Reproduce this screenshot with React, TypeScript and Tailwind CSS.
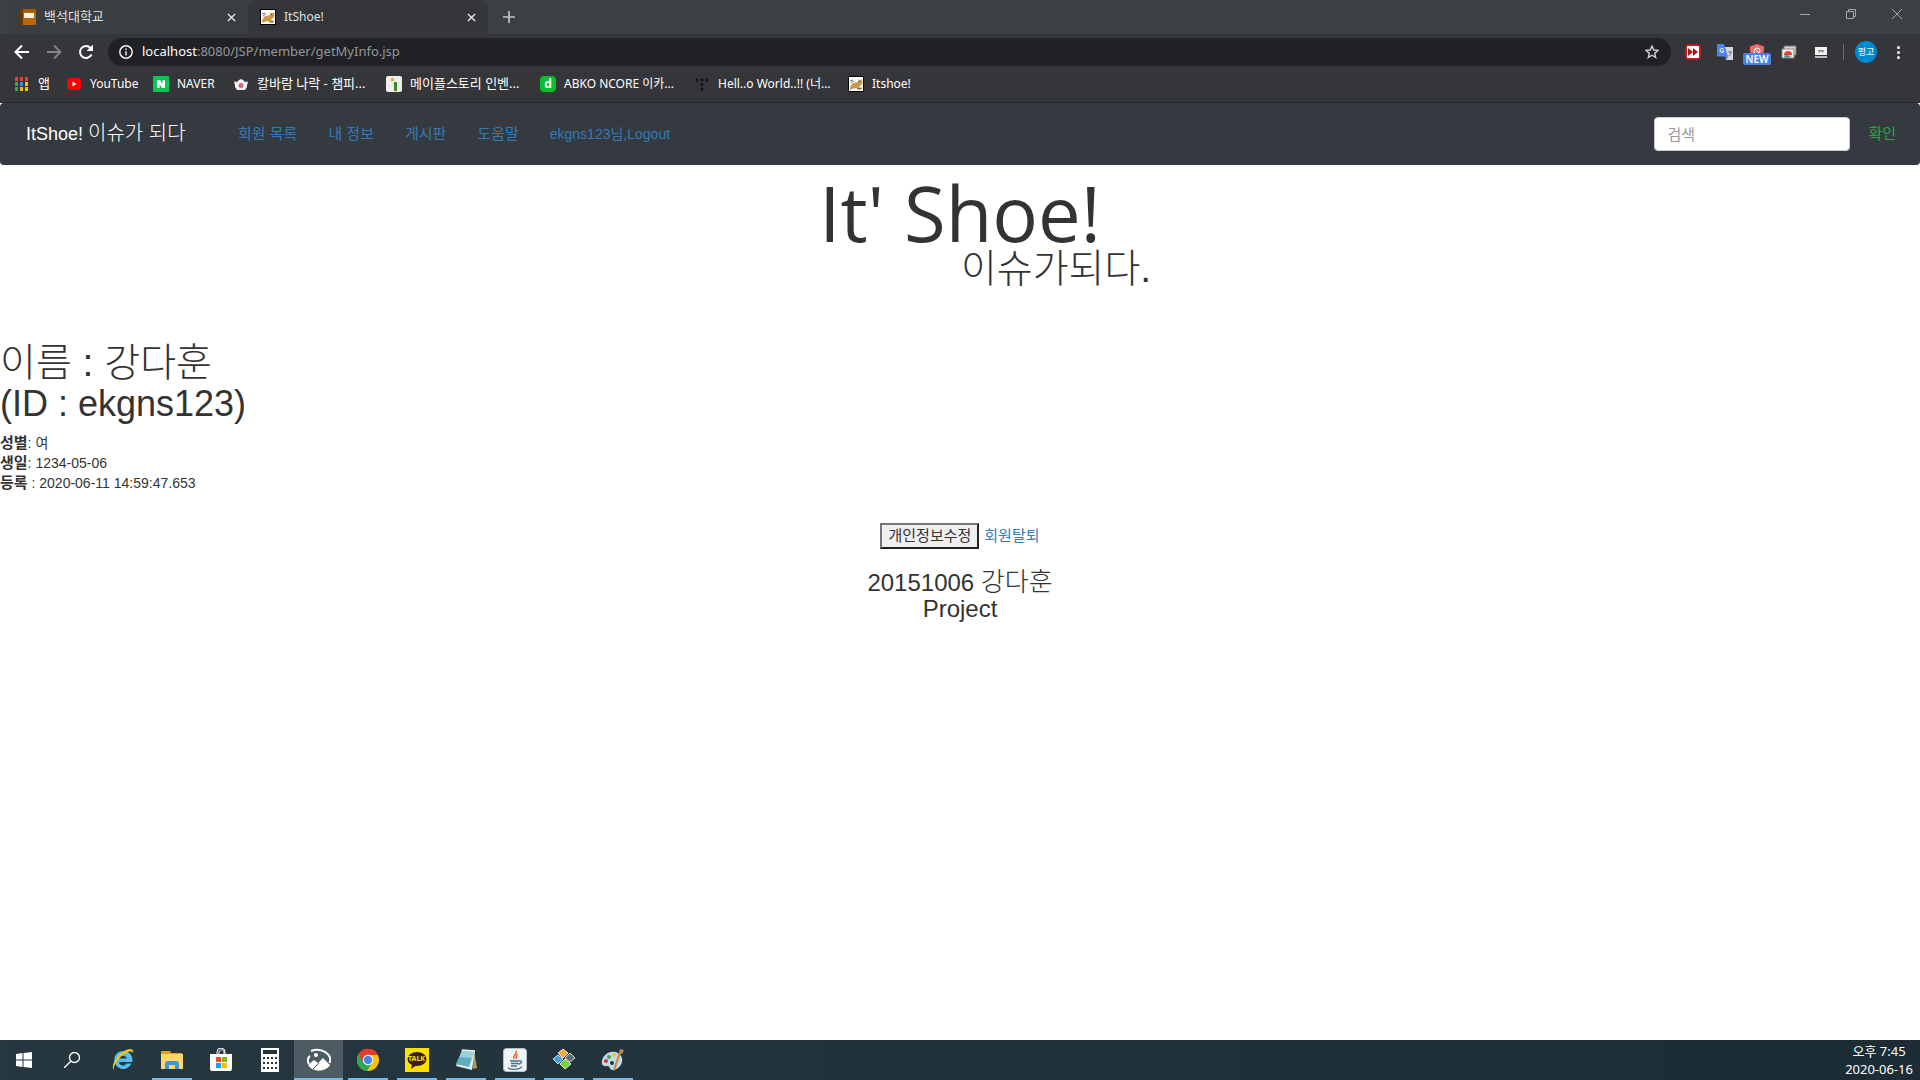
import React from "react";

const ui = "font-['Noto_Sans','Noto_Sans_CJK_KR',sans-serif]";
const body = "font-['Liberation_Sans','Noto_Sans_CJK_KR',sans-serif]";

function Cat() {
  return (
    <svg viewBox="0 0 16 16" className="size-4 shrink-0">
      <rect x=".5" y=".5" width="15" height="15" fill="#fff" stroke="#000" />
      <path d="M2 12c1-3 2-5 4-5l4-1 .5-3 1 1h1.500l1-1 .5 4-1.500 2-2 2 3 2-2 1-4-2-4 1-2 1z" fill="#c89a45" />
      <path d="M2 5l3-1M3 7l3-2M9 13l5-1" stroke="#5b5142" strokeWidth=".8" />
      <circle cx="11.5" cy="5.5" r=".6" fill="#333" />
    </svg>
  );
}

function Book() {
  return (
    <svg viewBox="0 0 16 16" className="size-4 shrink-0">
      <rect width="16" height="16" rx="1" fill="#b86808" />
      <rect width="3" height="16" fill="#6b3805" />
      <rect x="3" width="13" height="3" fill="#a05a08" />
      <rect x="4" y="4" width="10" height="5" fill="#f6f1e6" />
    </svg>
  );
}

function Close({ className }: { className: string }) {
  return (
    <svg viewBox="0 0 10 10" className={className} fill="none" stroke="currentColor" strokeWidth="1.6">
      <path d="M1 1l8 8M9 1L1 9" />
    </svg>
  );
}

function Tab({ icon, title, active }: { icon: React.ReactNode; title: string; active?: boolean }) {
  return (
    <div
      role="tab"
      aria-selected={!!active}
      className={`flex h-[34px] w-60 items-center rounded-t-lg px-3 text-[#dee1e6] ${active ? "bg-[#35363a] text-xs" : "bg-[#3a3e40] text-[13px]"}`}
    >
      {icon}
      <span className="ml-2 flex-1">{title}</span>
      <button aria-label="탭 닫기">
        <Close className="size-[9px]" />
      </button>
    </div>
  );
}

const bookmarks: { label: string; size: string; icon: React.ReactNode }[] = [
  {
    label: "앱",
    size: "w-[52px] text-[13px]",
    icon: (
      <svg viewBox="0 0 16 16" className="size-4 shrink-0">
        {["#ea4335", "#ea4335", "#ea4335", "#34a853", "#4285f4", "#fbbc04", "#34a853", "#fbbc04", "#fbbc04"].map((c, i) => (
          <rect key={i} x={1 + (i % 3) * 5} y={1 + Math.floor(i / 3) * 5} width="3" height="4" fill={c} />
        ))}
      </svg>
    ),
  },
  {
    label: "YouTube",
    size: "w-[87px] text-xs",
    icon: (
      <svg viewBox="0 0 16 16" className="size-4 shrink-0">
        <rect x="1" y="2" width="14" height="12" rx="3" fill="#f00" />
        <path d="M6.500 5.500v5L10.500 8z" fill="#fff" />
      </svg>
    ),
  },
  {
    label: "NAVER",
    size: "w-20 text-xs",
    icon: (
      <svg viewBox="0 0 16 16" className="size-4 shrink-0">
        <rect width="16" height="16" fill="#06c656" />
        <path d="M4 4h3l2.500 4V4H12v8H9L6.500 8v4H4z" fill="#fff" />
      </svg>
    ),
  },
  {
    label: "칼바람 나락 - 챔피...",
    size: "w-[153px] text-[13px]",
    icon: (
      <svg viewBox="0 0 16 16" className="size-4 shrink-0">
        <path d="M1 6l3 0 2-2 2-1 2 1 2 2 3 0-1 3v2l-2 3H4l-2-3V9z" fill="#f5f5f5" />
        <circle cx="8" cy="9.500" r="2.500" fill="#d86870" />
        <path d="M1 5l3 1M15 5l-3 1" stroke="#777" />
      </svg>
    ),
  },
  {
    label: "메이플스토리 인벤...",
    size: "w-[154px] text-[13px]",
    icon: (
      <svg viewBox="0 0 16 16" className="size-4 shrink-0">
        <rect width="16" height="16" rx="2" fill="#eee" />
        <rect x="5" y="2" width="3" height="3" fill="#f9ac0c" />
        <rect x="8" y="6" width="3" height="9" fill="#3d8b1e" />
      </svg>
    ),
  },
  {
    label: "ABKO NCORE 이카...",
    size: "w-[154px] text-xs",
    icon: (
      <span className="grid size-4 shrink-0 place-items-center rounded-sm bg-[#0abf2c] text-xs leading-4 font-bold text-white">d</span>
    ),
  },
  {
    label: "Hell..o World..!! (너...",
    size: "w-[154px] text-xs",
    icon: (
      <svg viewBox="0 0 16 16" className="size-4 shrink-0" fill="#111">
        <circle cx="3" cy="4" r="1.500" />
        <circle cx="8" cy="4" r="1.500" />
        <circle cx="13" cy="4" r="1.500" />
        <circle cx="8" cy="8.500" r="1.500" />
        <circle cx="8" cy="13" r="1.500" />
      </svg>
    ),
  },
  { label: "Itshoe!", size: "w-20 text-xs", icon: <Cat /> },
];

function Browser() {
  return (
    <header className={`${ui} border-b border-[#28292c] bg-[#35363a] text-xs text-white`}>
      <div className="flex h-[34px] items-start bg-[#3c4043]">
        <div role="tablist" className="flex pl-2">
          <Tab icon={<Book />} title="백석대학교" />
          <Tab icon={<Cat />} title="ItShoe!" active />
        </div>
        <button aria-label="새 탭" className="ml-[15px] self-center">
          <svg viewBox="0 0 12 12" className="size-3" stroke="#c0c2c4" strokeWidth="1.700">
            <path d="M6 0v12M0 6h12" />
          </svg>
        </button>
        <div className="ml-auto flex h-7 items-center gap-9 pr-[18px] text-[#a3a5a7]">
          <button aria-label="최소화">
            <svg viewBox="0 0 10 10" className="size-[10px]" stroke="currentColor">
              <path d="M0 5.500h10" />
            </svg>
          </button>
          <button aria-label="이전 크기로">
            <svg viewBox="0 0 10 10" className="size-[10px]" stroke="currentColor" fill="none">
              <path d="M.5 2.500h7v7h-7zM2.500 2.500v-2h7v7h-2" />
            </svg>
          </button>
          <button aria-label="닫기">
            <svg viewBox="0 0 10 10" className="size-[10px]" stroke="currentColor">
              <path d="M0 0l10 10M10 0L0 10" />
            </svg>
          </button>
        </div>
      </div>
      <div className="flex h-9 items-center pr-5 pl-[14px]">
        <button aria-label="뒤로">
          <svg viewBox="0 0 16 16" className="size-4" fill="none" stroke="#fff" strokeWidth="2">
            <path d="M15 8H2M8 1.500L1.500 8 8 14.500" />
          </svg>
        </button>
        <button aria-label="앞으로" className="ml-4">
          <svg viewBox="0 0 16 16" className="size-4" fill="none" stroke="#85868a" strokeWidth="1.800">
            <path d="M1 8h13M8 1.500L14.500 8 8 14.500" />
          </svg>
        </button>
        <button aria-label="새로고침" className="ml-4">
          <svg viewBox="0 0 16 16" className="size-4">
            <path d="M13.500 10.500A6 6 0 1 1 12.500 4" fill="none" stroke="#fff" strokeWidth="2" />
            <path d="M15 .5v6.500H8.500z" fill="#fff" />
          </svg>
        </button>
        <div className="ml-[14px] flex h-7 flex-1 items-center rounded-full bg-[#202124] pr-3 pl-[11px]">
          <svg viewBox="0 0 14 14" className="size-[14px]" fill="none" stroke="#f1f1f1" strokeWidth="1.500">
            <circle cx="7" cy="7" r="6.200" />
            <path d="M7 6.200v4.300M7 3.500v1.500" />
          </svg>
          <a href="#url" className="ml-[9px] flex-1 text-[13px] text-[#95979a]">
            <span className="text-white">localhost</span>:8080/JSP/member/getMyInfo.jsp
          </a>
          <button aria-label="북마크">
            <svg viewBox="0 0 14 14" className="size-[14px]" fill="none" stroke="#d0d1d3" strokeWidth="1.400">
              <path d="M7 1l1.700 4 4.300.4-3.300 2.800 1 4.300L7 10.200l-3.700 2.300 1-4.300L1 5.400 5.300 5z" />
            </svg>
          </button>
        </div>
        <div className="ml-[14px] flex items-center gap-4">
          <svg viewBox="0 0 16 16" className="size-4">
            <rect width="16" height="16" rx="4" fill="#c4191c" />
            <rect x="2" y="2" width="12" height="12" rx="1" fill="#fff" />
            <path d="M3 4l5 4-5 4zM8 4l5 4-5 4z" fill="#b5151a" />
          </svg>
          <svg viewBox="0 0 16 16" className="size-4">
            <path d="M6 3h10v13H9z" fill="#d5d6d8" />
            <path d="M0 0h7l4 12.500H0z" fill="#4b84ee" />
            <path d="M8 13l3-.5-2 3.500z" fill="#2b57b5" />
            <path d="M6.500 5A2 2 0 1 0 7 7H5" fill="none" stroke="#fff" />
            <path d="M11 8h4M13 7v1M11.500 12c2-1 2.500-2 2.500-4" fill="none" stroke="#667788" />
          </svg>
          <div className="relative size-4">
            <svg viewBox="0 0 16 16" className="size-4">
              <path d="M8 0l7 2.500c.5 5-1 10-7 13.500C2 12.500.5 7.500 1 2.500z" fill="#ee6a69" />
              <circle cx="8" cy="7" r="3" fill="none" stroke="#fff" />
              <path d="M6 5l4 4" stroke="#fff" />
            </svg>
            <span className="absolute top-[9px] -left-[6px] h-3 w-7 rounded-xs bg-[#4d80e4] text-center text-[10px] leading-3 font-semibold text-white">NEW</span>
          </div>
          <svg viewBox="0 0 16 16" className="size-4">
            <path d="M3 2h12v9H3z" fill="#d5d6d2" stroke="#777" />
            <path d="M1 5h12v9H1z" fill="#f1f1ee" stroke="#888" />
            <path d="M3 13.500a4 4 0 0 1 2-3.500l2 3.500z" fill="#36a352" />
            <path d="M3 11a4 4 0 0 1 8 0z" fill="#dd4436" />
            <path d="M11 11l.5 2.500H8z" fill="#f9c51a" />
            <circle cx="7.200" cy="12.500" r="1.600" fill="#4683ea" />
          </svg>
          <svg viewBox="0 0 16 16" className="size-4">
            <rect x="2" y="3" width="12" height="8" fill="#f2f2f2" />
            <rect x="2" y="12" width="12" height="2" fill="#bbb" />
            <path d="M6 8.500V6l1 1.500L8 6l1 1.500L10 6v2.500" fill="none" stroke="#555" strokeWidth=".8" />
          </svg>
        </div>
        <div className="ml-[14px] h-4 w-px bg-[#696a6e]" />
        <span className="ml-[11px] grid size-[22px] place-items-center rounded-full bg-[#0288d1] text-[9px] text-white">펑고</span>
        <button aria-label="메뉴" className="ml-5 flex flex-col gap-0.5">
          <span className="size-[3px] rounded-full bg-white" />
          <span className="size-[3px] rounded-full bg-white" />
          <span className="size-[3px] rounded-full bg-white" />
        </button>
      </div>
      <nav aria-label="북마크" className="flex h-8 items-center pb-1 pl-[14px]">
        {bookmarks.map((b) => (
          <a key={b.label} href="#bookmark" className={`flex shrink-0 items-center gap-2 whitespace-nowrap ${b.size}`}>
            {b.icon}
            <span>{b.label}</span>
          </a>
        ))}
      </nav>
    </header>
  );
}

function Page() {
  return (
    <main className={`${body} flex-1 bg-white text-sm leading-5 text-[#333]`}>
      <nav className="flex h-[62px] items-center rounded-sm bg-[#343a40] pr-6 pl-[26px] text-[#337ab7]">
        <a href="#home" className="w-[212px] text-lg text-white">
          ItShoe! <span className="text-[20px] font-light">이슈가 되다</span>
        </a>
        <div className="flex gap-[31px] text-[15px]">
          <a href="#members">회원 목록</a>
          <a href="#me">내 정보</a>
          <a href="#board">게시판</a>
          <a href="#help">도움말</a>
          <a href="#logout" className="text-sm">
            ekgns123님,Logout
          </a>
        </div>
        <form className="ml-auto flex items-center" onSubmit={(e) => e.preventDefault()}>
          <input
            aria-label="검색"
            placeholder="검색"
            className="h-[34px] w-[196px] rounded-sm border border-[#ccc] bg-white px-3 text-[15px] text-[#555] placeholder:text-[#999]"
          />
          <button className="ml-[18px] text-[15px] text-[#28a745]">확인</button>
        </form>
      </nav>
      <div className="flex flex-col items-center pt-3">
        <h1 className="font-['Open_Sans',sans-serif] text-[76px] leading-[72px]">It' Shoe!</h1>
        <p className="ml-48 text-[39px] leading-10 font-light">이슈가되다.</p>
      </div>
      <section className="pt-[54px]">
        <h1 className="text-4xl leading-10">
          <span className="text-[39px] font-light">이름 : 강다훈</span>
          <br />
          (ID : ekgns123)
        </h1>
        <p className="pt-[9px]">
          <b className="text-[15px]">성별</b>: 여
          <br />
          <b className="text-[15px]">생일</b>: 1234-05-06
          <br />
          <b className="text-[15px]">등록</b> : 2020-06-11 14:59:47.653
        </p>
      </section>
      <div className="flex items-center justify-center gap-[5px] pt-[30px] text-[15px]">
        <button className="h-[26px] border-2 border-t-[#767676] border-r-[#222] border-b-[#222] border-l-[#767676] bg-[#efefef] px-1.5 leading-5">
          개인정보수정
        </button>
        <a href="#leave" className="text-[#337ab7]">
          회원탈퇴
        </a>
      </div>
      <footer className="pt-5 text-center text-2xl leading-[26px]">
        20151006 <span className="text-[26px] font-light">강다훈</span>
        <br />
        Project
      </footer>
    </main>
  );
}

const tasks: { name: string; state?: string; icon: React.ReactNode }[] = [
  {
    name: "Internet Explorer",
    icon: (
      <svg viewBox="0 0 24 24" className="size-6">
        <path d="M12 3a9 9 0 1 0 8.500 12.500h-5A4 4 0 0 1 8 14h13.500C22 7 18 3 12 3zM8.200 10.500a4 4 0 0 1 7.600 0z" fill="#53c0f0" />
        <path d="M3 22C-1 18 6 6 15 2c5-2 8-1 7 3-1-2-3-2-7 0C8 9 2 17 3 22z" fill="#f5c518" />
      </svg>
    ),
  },
  {
    name: "파일 탐색기",
    state: "open",
    icon: (
      <svg viewBox="0 0 24 24" className="size-6">
        <path d="M1 3h9l1 2h11v15H1z" fill="#e5a11c" />
        <path d="M1 6h22v15H1z" fill="#ffd768" />
        <path d="M5 21v-6l2-2h10l2 2v6h-4v-4H9v4z" fill="#3f95d6" />
      </svg>
    ),
  },
  {
    name: "Microsoft Store",
    icon: (
      <svg viewBox="0 0 24 24" className="size-6">
        <path d="M8 7V4a3 3 0 0 1 8 0v3M10 7V4c0-3 5-3 5 0v3" fill="none" stroke="#fff" />
        <path d="M1 6h22v15l-1 2H2l-1-2z" fill="#fff" />
        <path d="M7 9h5v5H7z" fill="#f25022" />
        <path d="M13 9h5v5h-5z" fill="#7fba00" />
        <path d="M7 15h5v5H7z" fill="#00a4ef" />
        <path d="M13 15h5v5h-5z" fill="#ffb900" />
      </svg>
    ),
  },
  {
    name: "계산기",
    icon: (
      <svg viewBox="0 0 24 24" className="size-6">
        <path d="M3 0h18v24H3z" fill="#fff" />
        <path d="M5 2h14v4H5z" fill="#24343c" />
        {[9, 14, 19].map((y) => [5, 9, 13, 17].map((x) => <rect key={`${x}-${y}`} x={x} y={y} width="2" height="2" fill="#24343c" />))}
      </svg>
    ),
  },
  {
    name: "사진",
    state: "active",
    icon: (
      <svg viewBox="0 0 24 24" className="size-6" fill="none">
        <path d="M2 16C0 13 1 9 3 8M4 3C14-1 26 6 22.500 15" stroke="#fff" strokeWidth="2" />
        <path d="M1 17l6-5 4 3 5-5 7 7c-4 7-17 8-22 0z" fill="#fff" />
        <circle cx="9" cy="7" r="2" fill="#fff" />
        <path d="M6 21l6-6" stroke="#4d5b63" />
      </svg>
    ),
  },
  {
    name: "Chrome",
    state: "open",
    icon: (
      <svg viewBox="0 0 24 24" className="size-6">
        <circle cx="12" cy="12" r="11" fill="#fbc116" />
        <path d="M2.500 6.500A11 11 0 0 0 11 23l5-8-8-1z" fill="#2da94f" />
        <path d="M2.500 6.500L7.500 15l4-8h10.500A11 11 0 0 0 2.500 6.500z" fill="#e33b2e" />
        <circle cx="12" cy="12" r="5.200" fill="#fff" />
        <circle cx="12" cy="12" r="4.200" fill="#4285f4" />
      </svg>
    ),
  },
  {
    name: "카카오톡",
    state: "open",
    icon: (
      <div className="relative size-6 bg-[#fae100]">
        <svg viewBox="0 0 24 24" className="size-6">
          <ellipse cx="12" cy="11" rx="9.500" ry="7" fill="#3b1e1e" />
          <path d="M7 16l-1 5 6-4z" fill="#3b1e1e" />
        </svg>
        <span className="absolute inset-x-0 top-[7px] text-center text-[7px] leading-2 font-bold text-[#fae100]">TALK</span>
      </div>
    ),
  },
  {
    name: "메모장",
    state: "open",
    icon: (
      <svg viewBox="0 0 24 24" className="size-6">
        <path d="M20 3l3 17-4 1z" fill="#b99b4d" />
        <path d="M8 2l13 1-3 19-16-4z" fill="#d9eef2" />
        <path d="M8 3l12 1-5 15-13-3z" fill="#62adbd" />
        <path d="M8 3l12 1-2 6-12-1z" fill="#9bd0da" />
        <path d="M8 2l13 1" stroke="#eee" strokeWidth="1.500" />
      </svg>
    ),
  },
  {
    name: "Java",
    state: "open",
    icon: (
      <svg viewBox="0 0 24 24" className="size-6" fill="none">
        <rect x=".5" y=".5" width="23" height="23" rx="3" fill="#f0f3f5" stroke="#b5c1ca" />
        <path d="M13 3c2 3-4 4-2 8M15 6c-3 2-1 3-2 5" stroke="#e4692a" strokeWidth="1.500" />
        <path d="M7 13h9M8 15.500h7M8 18h6M16 13c4-1 3 3-1 3M5 20c4 2 10 2 14-1" stroke="#426c91" strokeWidth="1.300" />
      </svg>
    ),
  },
  {
    name: "도구",
    state: "open",
    icon: (
      <svg viewBox="0 0 24 24" className="size-6" stroke="#fff" strokeWidth=".8">
        <path d="M11 1l5 4-5 5-5-5z" fill="#f2ab35" />
        <path d="M18 5l5 5-5 4-5-4z" fill="#666b6e" />
        <path d="M6 7l5 4-5 5-5-5z" fill="#4a9ee0" />
        <path d="M13 11l6 5-6 5-5-5z" fill="#6fd632" />
      </svg>
    ),
  },
  {
    name: "그림판",
    state: "open",
    icon: (
      <svg viewBox="0 0 24 24" className="size-6">
        <path d="M10 4C4 5 0 11 1 16c1 3 5 2 6 2 2 0 1 4 5 4 7-1 10-7 9-12-1-4-6-7-11-6z" fill="#b9dcee" />
        <circle cx="5" cy="13" r="2" fill="#d33c35" />
        <circle cx="8" cy="9" r="2" fill="#48a546" />
        <circle cx="13" cy="7" r="2" fill="#efc52e" />
        <circle cx="11" cy="15" r="2" fill="#24343c" />
        <path d="M20 5l-6 17-2 1 1-4 5-15z" fill="#d9822a" />
        <path d="M18 5l1-4 4 1-2 4z" fill="#b78954" />
      </svg>
    ),
  },
];

function Taskbar() {
  return (
    <footer className={`${ui} flex h-10 items-stretch bg-linear-to-r from-[#263740] to-[#1c2c34] text-[13px] text-white`}>
      <button aria-label="시작" className="grid w-12 place-items-center">
        <svg viewBox="0 0 16 16" className="size-4" fill="#fff">
          <path d="M0 2l6.500-1v6.500H0zM7.500 1L16 0v7.500H7.500zM0 8.500h6.500V15L0 14zM7.500 8.500H16V16l-8.500-1z" />
        </svg>
      </button>
      <button aria-label="검색" className="mr-0.5 grid w-12 place-items-center">
        <svg viewBox="0 0 16 16" className="size-4" fill="none" stroke="#fff" strokeWidth="1.300">
          <circle cx="10.500" cy="5.500" r="5" />
          <path d="M7 9l-7 7" />
        </svg>
      </button>
      {tasks.map((t) => (
        <button key={t.name} aria-label={t.name} className={`flex w-[49px] flex-col items-center ${t.state === "active" ? "bg-[#4d5b63]" : ""}`}>
          <span className="grid h-[38px] place-items-center pt-0.5">{t.icon}</span>
          {t.state && <span className={`h-0.5 bg-[#76b9ed] ${t.state === "active" ? "w-full" : "w-10"}`} />}
        </button>
      ))}
      <time className="ml-auto pr-[7px] text-center leading-[18px]">
        <span className="block pt-0.5">오후 7:45</span>
        <span className="block">2020-06-16</span>
      </time>
    </footer>
  );
}

export default function App() {
  return (
    <div className="flex min-h-screen flex-col">
      <Browser />
      <Page />
      <Taskbar />
    </div>
  );
}
